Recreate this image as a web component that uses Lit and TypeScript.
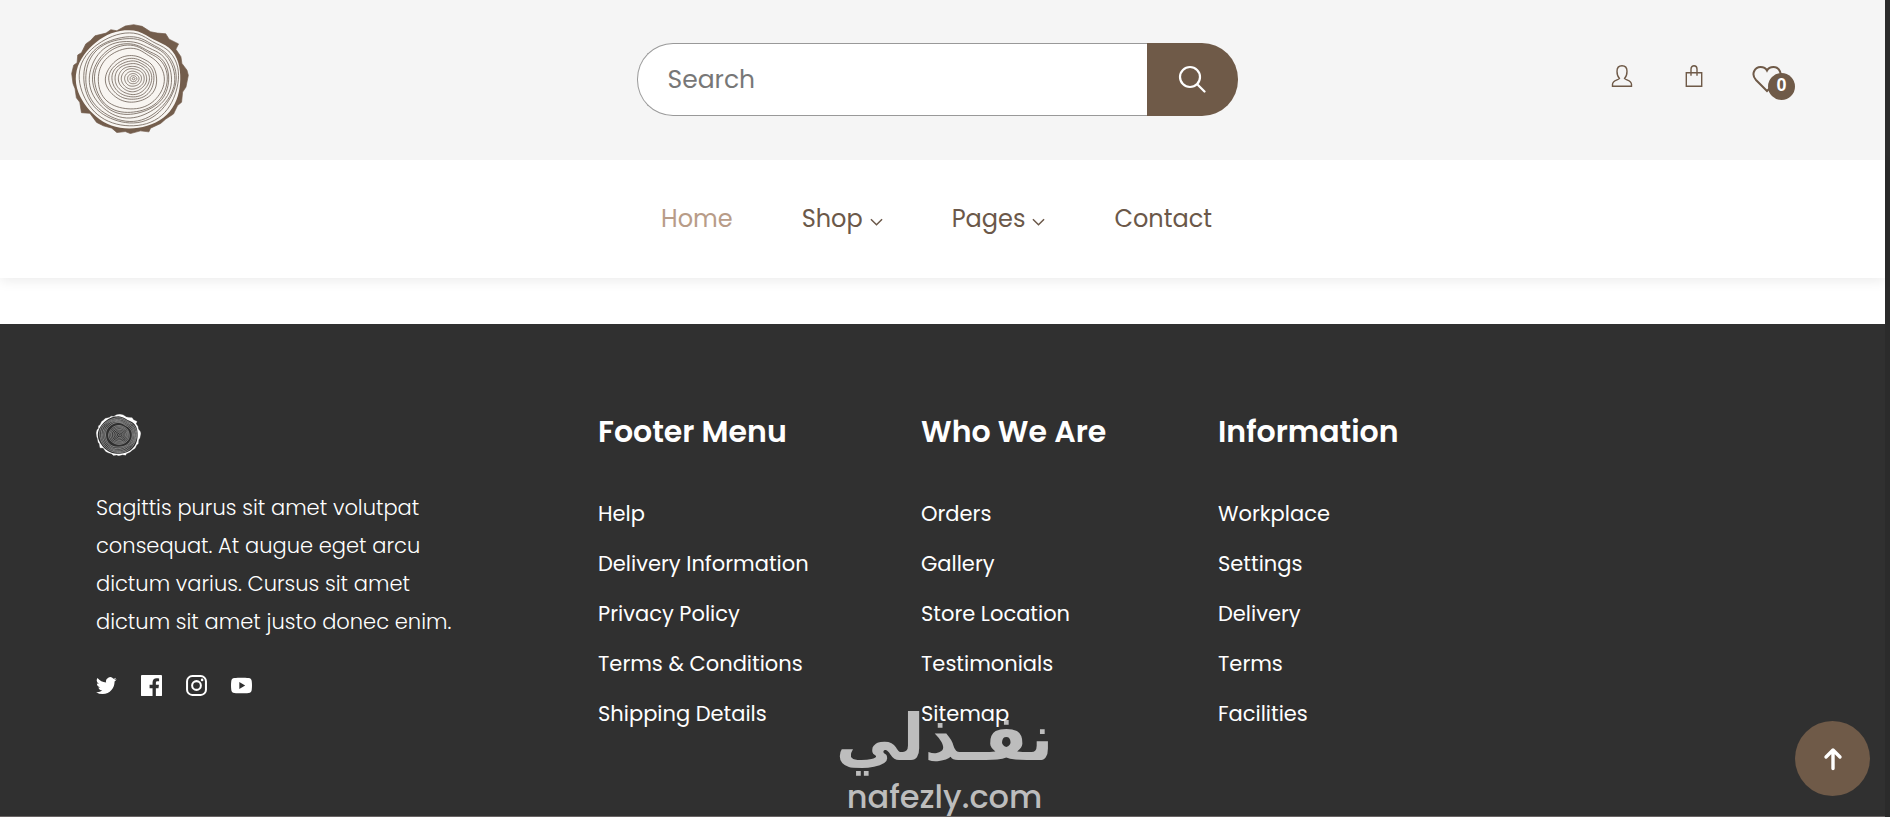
import { LitElement, html, css, svg } from "lit";
import { customElement, property } from "lit/decorators.js";

const BARK =
  "M66 190L72 165L82 158L84 135L95 128L108 102L122 92L135 78L168 70L182 60L200 63L225 49L250 45L275 50L300 66L320 70L345 72L355 88L383 102L375 118L390 140L393 160L408 180L412 195L405 230L395 245L392 275L380 285L368 310L345 325L330 338L300 352L295 363L270 360L240 368L225 362L200 365L185 352L160 345L140 335L120 308L95 306L90 275L80 262L76 235L70 220Z";

/* One growth ring: a closed curve that is slightly uneven and dented at the upper right. */
function ring(radius: number): string {
  const t = radius / 150;
  const cx = 250 - 13 * t;
  const cy = 205 + 2 * t;
  const points: string[] = [];
  for (let i = 0; i < 72; i++) {
    const a = (i / 72) * Math.PI * 2;
    const dent = 0.07 * t * Math.exp(-Math.pow((a - 5.25) / 0.3, 2));
    const wave =
      1 +
      0.014 * Math.sin(3 * a + radius * 0.07) +
      0.009 * Math.sin(5 * a + radius * 0.15) -
      dent;
    const x = cx + radius * wave * Math.cos(a);
    const y = cy + radius * (0.88 + 0.06 * t) * wave * Math.sin(a);
    points.push(`${x.toFixed(1)} ${y.toFixed(1)}`);
  }
  return `M${points.join("L")}Z`;
}

const RINGS = [147, 137, 132, 122, 113, 108, 98, 76, 67, 59, 51, 42, 34, 25, 17, 10, 4];
const LIGHT_RINGS = [144, 134, 124, 114, 104, 80, 70, 60, 48, 36, 24, 10];

@customElement("wood-logo")
export class WoodLogo extends LitElement {
  @property({ type: Boolean, reflect: true }) light = false;
  static styles = css`
    :host { display: block; }
    svg { display: block; width: 100%; }
    .bark { fill: #735d4c; stroke: #735d4c; stroke-width: 2; stroke-linejoin: round; }
    .face { fill: #f8f5f1; }
    .ring { fill: none; stroke: #6d6057; stroke-width: 2.4; }
    :host([light]) .bark { fill: #fff; stroke: #fff; }
    :host([light]) .face { fill: #303030; }
    :host([light]) .ring { stroke: #b4b4b4; stroke-width: 5; }
  `;
  render() {
    return html`<svg viewBox="64 43 350 327" role="img" aria-label="Wood store">
      <path class="bark" d=${BARK} />
      <path class="face" d=${ring(155)} />
      ${(this.light ? LIGHT_RINGS : RINGS).map((r) => svg`<path class="ring" d=${ring(r)} />`)}
    </svg>`;
  }
}

const chevron = html`<svg class="chevron" viewBox="0 0 14 14" aria-hidden="true"><path d="M1 4.5L7 10.5L13 4.5" /></svg>`;

const NAV = [
  { label: "Home", active: true, menu: false },
  { label: "Shop", active: false, menu: true },
  { label: "Pages", active: false, menu: true },
  { label: "Contact", active: false, menu: false },
];

const COLUMNS = [
  { title: "Footer Menu", links: ["Help", "Delivery Information", "Privacy Policy", "Terms & Conditions", "Shipping Details"] },
  { title: "Who We Are", links: ["Orders", "Gallery", "Store Location", "Testimonials", "Sitemap"] },
  { title: "Information", links: ["Workplace", "Settings", "Delivery", "Terms", "Facilities"] },
];

const SOCIAL = [
  {
    name: "Twitter",
    icon: svg`<path d="M23.6 4.9a9.6 9.6 0 0 1-2.8.8 4.8 4.8 0 0 0 2.1-2.7 9.6 9.6 0 0 1-3 1.2 4.8 4.8 0 0 0-8.3 4.4A13.7 13.7 0 0 1 1.7 3.5a4.8 4.8 0 0 0 1.5 6.5 4.8 4.8 0 0 1-2.2-.6v.1a4.8 4.8 0 0 0 3.9 4.7 4.9 4.9 0 0 1-2.2.1 4.8 4.8 0 0 0 4.5 3.3A9.7 9.7 0 0 1 .1 19.6a13.7 13.7 0 0 0 7.4 2.2c8.9 0 13.7-7.4 13.7-13.7v-.6a9.8 9.8 0 0 0 2.4-2.6z"/>`,
  },
  {
    name: "Facebook",
    icon: svg`<path d="M1 0H23a1 1 0 0 1 1 1V23a1 1 0 0 1-1 1H17v-9h3l.5-3.8H17V9c0-1.1.4-1.8 1.9-1.8h1.8V3.9c-.4 0-1.5-.2-2.8-.2-2.9 0-4.7 1.7-4.7 4.9v2.6H9.8V15h3.4v9H1a1 1 0 0 1-1-1V1a1 1 0 0 1 1-1z"/>`,
  },
  {
    name: "Instagram",
    icon: svg`<rect x="1.2" y="1.2" width="21.6" height="21.6" rx="6" fill="none" stroke="currentColor" stroke-width="2.3"/><circle cx="12" cy="12" r="5" fill="none" stroke="currentColor" stroke-width="2.3"/><circle cx="18.4" cy="5.6" r="1.5"/>`,
  },
  {
    name: "YouTube",
    icon: svg`<path fill-rule="evenodd" d="M4 3.5C8 3 16 3 20 3.5c2.6.3 3.5 1.4 3.7 3.7.4 3.2.4 6.4 0 9.6-.2 2.3-1.1 3.4-3.7 3.7-4 .5-12 .5-16 0C1.4 20.2.5 19.1.3 16.8c-.4-3.2-.4-6.4 0-9.6C.5 4.9 1.4 3.8 4 3.5zM9.5 8v8l6.7-4z"/>`,
  },
];

@customElement("app-root")
export class AppRoot extends LitElement {
  static styles = css`
    :host {
      display: flex;
      flex-direction: column;
      min-height: 100vh;
      box-sizing: border-box;
      border-right: 5px solid #2b2b2b;
      background: #fff;
      color: #6b5849;
      font-family: Poppins, Inter, "Open Sans", sans-serif;
    }
    *, *::before, *::after { box-sizing: border-box; }
    a { color: inherit; text-decoration: none; }
    ul { list-style: none; margin: 0; padding: 0; }
    button { border: 0; padding: 0; font: inherit; cursor: pointer; }

    .top {
      position: relative;
      display: grid;
      grid-template-columns: 1fr minmax(0, 601px) 1fr;
      align-items: center;
      height: 160px;
      padding: 0 82px 2px 71px;
      background: #f5f5f5;
    }
    .brand { width: 118px; }
    .search { display: flex; height: 73px; }
    .search input {
      flex: 1;
      min-width: 0;
      padding: 2px 30px 0;
      border: 1px solid #999;
      border-right: 0;
      border-radius: 36px 0 0 36px;
      background: #fff;
      color: #6b5849;
      font: inherit;
      font-size: 25px;
      outline: none;
    }
    .search input::placeholder { color: #777; opacity: 1; }
    .search button {
      display: grid;
      place-items: center;
      width: 91px;
      border-radius: 0 36px 36px 0;
      background: #6f5a48;
    }
    .search svg { width: 28px; fill: none; stroke: #fff; stroke-width: 2.2; stroke-linecap: round; }

    .actions { display: flex; justify-content: flex-end; align-items: center; gap: 48px; padding: 0 23px 6px 0; }
    .actions a { position: relative; display: block; }
    .actions svg { display: block; width: 24px; height: 28px; fill: none; stroke: #6f5a48; stroke-width: 1.4; }
    .actions .wish svg { width: 26px; stroke-width: 2; overflow: visible; }
    .badge {
      position: absolute;
      left: 14px;
      top: 11px;
      width: 27px;
      height: 27px;
      border-radius: 50%;
      background: #6f5a48;
      color: #fff;
      font-family: "Liberation Sans", Arial, sans-serif;
      font-size: 18px;
      font-weight: 700;
      line-height: 25px;
      text-align: center;
    }

    .menu {
      height: 118px;
      padding-right: 12px;
      box-shadow: 0 3px 12px rgba(0, 0, 0, 0.08);
    }
    .menu ul { display: flex; justify-content: center; align-items: center; gap: 69px; height: 118px; }
    .menu a { display: flex; align-items: center; gap: 7px; font-size: 24px; line-height: 36px; }
    .menu .active { color: #b89c88; }
    .chevron { width: 13px; height: 13px; margin-top: 4px; fill: none; stroke: currentColor; stroke-width: 1.6; }

    footer {
      position: relative;
      flex: 1;
      margin-top: 46px;
      padding: 84px 96px 82px;
      border-bottom: 1px solid #686363;
      background: #303030;
      color: #fff;
    }
    .columns {
      position: relative;
      z-index: 1;
      display: grid;
      grid-template-columns: 502fr 323fr 297fr 571fr;
    }
    .footer-logo { width: 45px; margin-top: 6px; }
    .about p { max-width: 380px; margin: 33px 0 34px; font-size: 21px; font-weight: 300; line-height: 38px; }
    .social { display: flex; gap: 24px; }
    .social a, .social svg { display: block; width: 21px; height: 21px; }
    .social svg { fill: currentColor; }
    h2 { margin: 0 0 40px; font-size: 30px; font-weight: 600; line-height: 48px; }
    .links { display: grid; gap: 14px; }
    .links a { font-size: 21px; line-height: 36px; display: inline-block; }

    .watermark {
      position: absolute;
      left: 0;
      right: 0;
      bottom: 0;
      height: 118px;
      padding-left: 4px;
      color: #bdbdbd;
      text-align: center;
      font-family: "DejaVu Sans", sans-serif;
      font-weight: 700;
      pointer-events: none;
    }
    .watermark .arabic { display: block; font-size: 64px; line-height: 80px; }
    .watermark .latin { display: block; font-family: Poppins, Lato, sans-serif; font-size: 32px; font-weight: 500; line-height: 38px; }

    .to-top {
      position: fixed;
      z-index: 2;
      right: 20px;
      bottom: 21px;
      display: grid;
      place-items: center;
      width: 75px;
      height: 75px;
      border-radius: 50%;
      background: #6f5a48;
    }
    .to-top svg { width: 20px; fill: none; stroke: #fff; stroke-width: 3.4; stroke-linecap: round; stroke-linejoin: round; }
  `;

  render() {
    return html`
      <header>
        <div class="top">
          <a class="brand" href="#"><wood-logo></wood-logo></a>
          <form class="search" role="search" @submit=${(e: Event) => e.preventDefault()}>
            <input type="text" placeholder="Search" aria-label="Search" />
            <button type="submit" aria-label="Submit search">
              <svg viewBox="0 0 28 28"><circle cx="12" cy="12" r="10" /><path d="M19.5 19.5L26.5 26.5" /></svg>
            </button>
          </form>
          <div class="actions">
            <a href="#" aria-label="Account">
              <svg viewBox="0 0 24 28"><path d="M9.5 16.5C7.5 14.5 7 11.5 7 9.2C7 5.8 9 3.7 12 3.7S17 5.8 17 9.2C17 11.5 16.5 14.5 14.5 16.5C15.5 18.2 21.5 18.3 21.5 22.5V24.3H2.5V22.5C2.5 18.3 8.5 18.2 9.5 16.5Z" /></svg>
            </a>
            <a href="#" aria-label="Cart">
              <svg viewBox="0 0 24 28"><path d="M4.3 10.8H19.7V24.3H4.3ZM9 13.8V7C9 2.7 15 2.7 15 7V13.8" /></svg>
            </a>
            <a class="wish" href="#" aria-label="Wishlist">
              <svg viewBox="2 0 26 28"><path d="M15 29L4 18C-1.5 12 3 5 8.5 5C11.5 5 14 6.5 15 8.5C16 6.5 18.5 5 21.5 5C27 5 31.5 12 26 18Z" /></svg>
              <span class="badge">0</span>
            </a>
          </div>
        </div>
        <nav class="menu" aria-label="Main">
          <ul>
            ${NAV.map((n) => html`<li><a href="#" class=${n.active ? "active" : ""}><span>${n.label}</span>${n.menu ? chevron : ""}</a></li>`)}
          </ul>
        </nav>
      </header>
      <footer>
        <div class="columns">
          <section class="about">
            <wood-logo class="footer-logo" light></wood-logo>
            <p>Sagittis purus sit amet volutpat<br />consequat. At augue eget arcu<br />dictum varius. Cursus sit amet<br />dictum sit amet justo donec enim.</p>
            <div class="social">
              ${SOCIAL.map((s) => html`<a href="#" aria-label=${s.name}><svg viewBox="0 0 24 24">${s.icon}</svg></a>`)}
            </div>
          </section>
          ${COLUMNS.map(
            (c) => html`<section>
              <h2>${c.title}</h2>
              <ul class="links">${c.links.map((l) => html`<li><a href="#">${l}</a></li>`)}</ul>
            </section>`
          )}
        </div>
        <div class="watermark">
          <span class="arabic" lang="ar" dir="rtl">نفـذلي</span>
          <span class="latin">nafezly.com</span>
        </div>
      </footer>
      <button class="to-top" type="button" aria-label="Back to top" @click=${() => window.scrollTo({ top: 0, behavior: "smooth" })}>
        <svg viewBox="0 0 20 24"><path d="M10 21.5V3.5M3 10L10 3L17 10" /></svg>
      </button>
    `;
  }
}
